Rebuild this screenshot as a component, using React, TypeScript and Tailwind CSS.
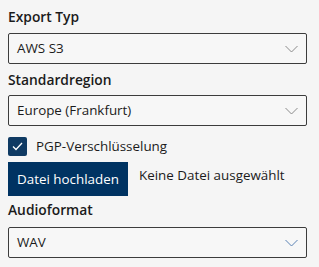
import React from "react";

const font = { fontFamily: '"Segoe UI", "Open Sans", "Noto Sans", sans-serif' };

function Chevron({ blue }: { blue?: boolean }) {
  return (
    <svg width="13" height="7" viewBox="0 0 13 7" className="absolute right-[8px] top-1/2 -translate-y-1/2">
      <path d="M0.5 0.5 L6.5 6.5 L12.5 0.5" fill="none" stroke={blue ? "#5a82b4" : "#8a8a8a"} strokeWidth="1" />
    </svg>
  );
}

function Select({ value, blue }: { value: string; blue?: boolean }) {
  return (
    <div className="relative w-[299px] h-[31px] border border-[#3c3c3c] rounded-[2px] bg-[#f7f7f7] flex items-center pl-[8px] text-[13.4px] text-[#1b1b1b]">
      {value}
      <Chevron blue={blue} />
    </div>
  );
}

const label = "text-[13.8px] font-semibold leading-[20px] text-[#1b1b1b]";

export default function App() {
  return (
    <div className="w-[319px] h-[267px] bg-[#f5f5f5] pl-[8px] pt-[7px] overflow-hidden" style={font}>
      <div className={label}>Export Typ</div>
      <div className="mt-[6px]">
        <Select value="AWS S3" />
      </div>
      <div className={"mt-[6px] " + label}>Standardregion</div>
      <div className="mt-[5px]">
        <Select value="Europe (Frankfurt)" />
      </div>
      <div className="mt-[11px] flex items-center h-[19px]">
        <div className="w-[19px] h-[19px] rounded-[2px] bg-[#0f3a63] flex items-center justify-center">
          <svg width="11" height="9" viewBox="0 0 11 9">
            <path d="M1 4.5 L4 7.5 L10 1" fill="none" stroke="#ffffff" strokeWidth="1.3" />
          </svg>
        </div>
        <span className="ml-[9px] text-[13.4px] text-[#1b1b1b]">PGP-Verschlüsselung</span>
      </div>
      <div className="mt-[6px] flex items-center">
        <div className="w-[120px] h-[34px] bg-[#003362] text-white text-[13.4px] flex items-center justify-center">
          Datei hochladen
        </div>
        <span className="ml-[11px] text-[13.4px] text-[#1b1b1b] -mt-[8px]">Keine Datei ausgewählt</span>
      </div>
      <div className={"mt-[4px] " + label}>Audioformat</div>
      <div className="mt-[7px]">
        <Select value="WAV" blue />
      </div>
    </div>
  );
}
